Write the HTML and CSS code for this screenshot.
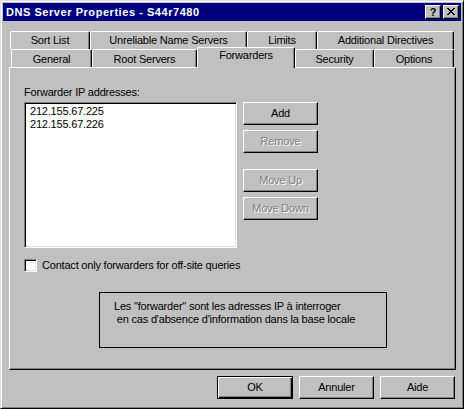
FILE: index.html
```html
<!DOCTYPE html>
<html>
<head>
<meta charset="utf-8">
<link rel="stylesheet" href="styles.css">
</head>
<body>
<div class="window">
  <div class="titlebar">
    <span class="title">DNS Server Properties - S44r7480</span>
    <div class="tbtns">
      <div class="tbtn help">?</div>
      <div class="tbtn close">
        <svg width="8" height="7" viewBox="0 0 8 7" shape-rendering="crispEdges"><path d="M0 0h2v1H0zM6 0h2v1H6zM1 1h2v1H1zM5 1h2v1H5zM2 2h4v1H2zM3 3h2v1H3zM2 4h4v1H2zM1 5h2v1H1zM5 5h2v1H5zM0 6h2v1H0zM6 6h2v1H6z" fill="#000"/></svg>
      </div>
    </div>
  </div>
  <div class="client">
    <div class="tabrow back">
      <div class="tab t-sort">Sort List</div>
      <div class="tab t-unrel">Unreliable Name Servers</div>
      <div class="tab t-limits">Limits</div>
      <div class="tab t-addl">Additional Directives</div>
    </div>
    <div class="tabrow front">
      <div class="tab t-general">General</div>
      <div class="tab t-root">Root Servers</div>
      <div class="tab t-fwd sel">Forwarders</div>
      <div class="tab t-sec">Security</div>
      <div class="tab t-opt">Options</div>
    </div>
    <div class="panel">
      <div class="label">Forwarder IP addresses:</div>
      <div class="fwd">
        <div class="listbox">
          <div class="item">212.155.67.225</div>
          <div class="item">212.155.67.226</div>
        </div>
        <div class="side">
          <button class="btn">Add</button>
          <button class="btn disabled">Remove</button>
          <button class="btn disabled spaced">Move Up</button>
          <button class="btn disabled">Move Down</button>
        </div>
      </div>
      <div class="check"><span class="box"></span><span class="check-label">Contact only forwarders for off-site queries</span></div>
      <div class="note">Les "forwarder" sont les adresses IP à interroger
 en cas d'absence d'information dans la base locale</div>
    </div>
    <div class="actions">
      <button class="btn default">OK</button>
      <button class="btn">Annuler</button>
      <button class="btn">Aide</button>
    </div>
  </div>
</div>
</body>
</html>
```
FILE: styles.css
```css
html, body {
  margin: 0;
  padding: 0;
  background: #c0c0c0;
}
body {
  font-family: "Liberation Sans", Arial, sans-serif;
  font-size: 11px;
  letter-spacing: -0.2px;
  color: #000;
}
.window {
  box-sizing: border-box;
  width: 464px;
  height: 409px;
  background: #c0c0c0;
  border: 1px solid;
  border-color: #dfdfdf #000 #000 #dfdfdf;
  box-shadow: inset 1px 1px #fff, inset -1px -1px #808080;
  padding: 2px;
}
.titlebar {
  height: 18px;
  background: #000080;
  display: flex;
  align-items: center;
  justify-content: space-between;
  padding: 0 2px 0 3px;
}
.title {
  color: #fff;
  font-weight: bold;
  font-size: 11px;
  line-height: 18px;
  letter-spacing: 0.55px;
}
.tbtns {
  display: flex;
  gap: 2px;
}
.tbtn {
  box-sizing: border-box;
  width: 16px;
  height: 14px;
  background: #c0c0c0;
  border: 1px solid;
  border-color: #fff #000 #000 #fff;
  box-shadow: inset -1px -1px #808080;
  display: flex;
  align-items: center;
  justify-content: center;
}
.help {
  font-weight: bold;
  font-size: 11px;
  line-height: 12px;
  padding-bottom: 1px;
  letter-spacing: 0;
}
.close svg {
  display: block;
  margin-bottom: 1px;
}
.client {
  padding: 10px 5px 0 6px;
}
.tabrow {
  display: flex;
  height: 18px;
}
.back {
  margin-left: 1px;
}
.front {
  margin-left: 2px;
  align-items: flex-end;
}
.tab {
  box-sizing: border-box;
  height: 18px;
  border-top: 1px solid #fff;
  border-left: 1px solid #fff;
  border-right: 1px solid #000;
  box-shadow: inset -1px 0 #808080;
  border-radius: 2px 2px 0 0;
  text-align: center;
  line-height: 16px;
  white-space: nowrap;
  background: #c0c0c0;
}
.front .tab {
  line-height: 18px;
}
.front .tab.sel {
  height: 21px;
  margin-bottom: -1px;
  position: relative;
  z-index: 1;
  line-height: 15px;
}
.t-sort { width: 80px; }
.t-unrel { width: 157px; }
.t-limits { width: 70px; }
.t-addl { width: 137px; }
.t-general { width: 81px; }
.t-root { width: 105px; }
.t-fwd { width: 98px; }
.t-sec { width: 79px; }
.t-opt { width: 80px; }
.panel {
  box-sizing: border-box;
  height: 303px;
  border-top: 1px solid #fff;
  border-left: 1px solid #fff;
  border-right: 1px solid #000;
  border-bottom: 1px solid #000;
  box-shadow: inset -1px -1px #808080;
  padding: 18px 14px 0 14px;
}
.label {
  line-height: 13px;
  margin-bottom: 3px;
}
.fwd {
  display: flex;
  gap: 6px;
}
.listbox {
  box-sizing: border-box;
  width: 213px;
  height: 146px;
  background: #fff;
  border: 1px solid;
  border-color: #808080 #fff #fff #808080;
  box-shadow: inset 1px 1px #000, inset -1px -1px #dfdfdf;
  padding: 2px 0 0 5px;
}
.item {
  line-height: 13px;
}
.side {
  display: flex;
  flex-direction: column;
  gap: 5px;
}
.btn {
  box-sizing: border-box;
  width: 75px;
  height: 23px;
  padding: 0;
  margin: 0;
  background: #c0c0c0;
  border: 1px solid;
  border-color: #fff #000 #000 #fff;
  box-shadow: inset -1px -1px #808080;
  font-family: "Liberation Sans", Arial, sans-serif;
  font-size: 11px;
  letter-spacing: -0.2px;
  color: #000;
  line-height: 19px;
}
.btn.disabled {
  color: #808080;
  text-shadow: 1px 1px #fff;
}
.btn.spaced {
  margin-top: 11px;
}
.btn.default {
  width: 76px;
  border-color: #000;
  box-shadow: inset 1px 1px #fff, inset -1px -1px #000, inset -2px -2px #808080;
}
.check {
  display: flex;
  align-items: center;
  margin-top: 11px;
  height: 13px;
}
.box {
  box-sizing: border-box;
  width: 13px;
  height: 13px;
  background: #fff;
  border: 1px solid;
  border-color: #808080 #fff #fff #808080;
  box-shadow: inset 1px 1px #000, inset -1px -1px #dfdfdf;
}
.check-label {
  margin-left: 5px;
  line-height: 13px;
}
.note {
  box-sizing: border-box;
  width: 288px;
  height: 56px;
  margin: 20px 0 0 75px;
  border: 1px solid #000;
  padding: 7px 0 0 14px;
  white-space: pre;
  line-height: 13px;
}
.actions {
  display: flex;
  justify-content: flex-end;
  gap: 6px;
  margin: 6px 1px 0 0;
}
```
